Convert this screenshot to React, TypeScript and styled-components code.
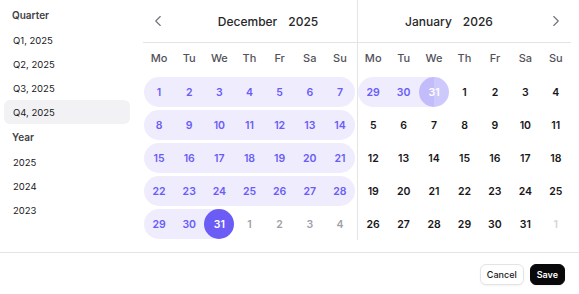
import React from "react"
import styled, { createGlobalStyle } from "styled-components"
import { ChevronLeft, ChevronRight } from "lucide-react"

type Kind = "range" | "end" | "outside" | "normal" | "disabled"

interface Cell {
	label: number
	kind: Kind
	ghost?: boolean
}

const weekdays = ["Mo", "Tu", "We", "Th", "Fr", "Sa", "Su"]

const range = (from: number, to: number, kind: Kind): Cell[] =>
	Array.from({ length: to - from + 1 }, (_, i) => ({ label: from + i, kind }))

const december: Cell[] = [
	...range(1, 30, "range"),
	{ label: 31, kind: "end" },
	...range(1, 4, "outside")
]

const january: Cell[] = [
	...range(29, 30, "range"),
	{ label: 31, kind: "end", ghost: true },
	...range(1, 31, "normal"),
	{ label: 1, kind: "disabled" }
]

const GlobalStyle = createGlobalStyle`
	body {
		margin: 0;
		background: #ffffff;
		font-family: Inter, "Noto Sans", sans-serif;
		color: #18181b;
	}
`

export default function App() {
	return (
		<Page>
			<GlobalStyle />
			<Main>
				<Sidebar>
					<GroupLabel>Quarter</GroupLabel>
					<PresetItem>Q1, 2025</PresetItem>
					<PresetItem>Q2, 2025</PresetItem>
					<PresetItem>Q3, 2025</PresetItem>
					<PresetItem $active>Q4, 2025</PresetItem>
					<GroupLabel>Year</GroupLabel>
					<PresetItem>2025</PresetItem>
					<PresetItem>2024</PresetItem>
					<PresetItem>2023</PresetItem>
				</Sidebar>
				<Calendars>
					<Month $width={214}>
						<MonthHeader>
							<NavButton>
								<ChevronLeft size={18} strokeWidth={1.5} />
							</NavButton>
							<MonthTitle $pad="0 0 0 6px">
								<span>December</span>
								<span>2025</span>
							</MonthTitle>
						</MonthHeader>
						<Grid $inset="0 2px 0 1px">
							{weekdays.map((d) => (
								<Weekday key={d}>{d}</Weekday>
							))}
						</Grid>
						<Days cells={december} inset="0 2px 0 1px" />
					</Month>
					<Month $width={213} $divider>
						<MonthHeader>
							<MonthTitle $pad="0 1px 0 0">
								<span>January</span>
								<span>2026</span>
							</MonthTitle>
							<NavButton>
								<ChevronRight size={18} strokeWidth={1.5} />
							</NavButton>
						</MonthHeader>
						<Grid $inset="0">
							{weekdays.map((d) => (
								<Weekday key={d}>{d}</Weekday>
							))}
						</Grid>
						<Days cells={january} inset="0" />
					</Month>
				</Calendars>
			</Main>
			<Footer>
				<Button>Cancel</Button>
				<Button $primary>Save</Button>
			</Footer>
		</Page>
	)
}

function Days({ cells, inset }: { cells: Cell[]; inset: string }) {
	return (
		<DayGrid $inset={inset}>
			{cells.map((c, i) => {
				const col = i % 7
				const inRange = c.kind === "range" || c.kind === "end"
				const prevInRange = col > 0 && (cells[i - 1].kind === "range" || cells[i - 1].kind === "end")
				return (
					<DayCell
						key={i}
						$band={inRange}
						$roundLeft={inRange && !prevInRange}
						$roundRight={c.kind === "range" && col === 6}
						$half={c.kind === "end"}
					>
						{c.kind === "end" ? (
							<Selected $ghost={c.ghost}>{c.label}</Selected>
						) : (
							<DayNumber $kind={c.kind}>{c.label}</DayNumber>
						)}
					</DayCell>
				)
			})}
		</DayGrid>
	)
}

const Page = styled.div`
	width: 579px;
	height: 294px;
	display: flex;
	flex-direction: column;
`
const Main = styled.div`
	display: flex;
	height: 252px;
`
const Sidebar = styled.div`
	width: 143px;
	box-sizing: border-box;
	padding: 2px 13px 0 4px;
	display: flex;
	flex-direction: column;
`
const GroupLabel = styled.div`
	height: 22px;
	margin: 2px 0;
	padding-left: 8px;
	display: flex;
	align-items: center;
	font-size: 10px;
	font-weight: 600;
	color: #3f3f46;
`
const PresetItem = styled.div<{ $active?: boolean }>`
	height: 24px;
	padding-left: 9px;
	display: flex;
	align-items: center;
	border-radius: 6px;
	font-size: 9.5px;
	color: #18181b;
	background: ${(p) => (p.$active ? "#f2f2f5" : "transparent")};
`
const Calendars = styled.div`
	display: flex;
	height: 240px;
`
const Month = styled.div<{ $width: number; $divider?: boolean }>`
	width: ${(p) => p.$width}px;
	border-left: ${(p) => (p.$divider ? "1px solid #e4e4e7" : "none")};
	display: flex;
	flex-direction: column;
`
const MonthHeader = styled.div`
	height: 42px;
	border-bottom: 1px solid #e4e4e7;
	display: flex;
	align-items: center;
`
const NavButton = styled.div`
	width: 30px;
	height: 30px;
	display: flex;
	align-items: center;
	justify-content: center;
	color: #71717a;
`
const MonthTitle = styled.div<{ $pad: string }>`
	flex: 1;
	display: flex;
	justify-content: center;
	gap: 11px;
	padding: ${(p) => p.$pad};
	font-size: 12px;
	font-weight: 500;
	color: #27272a;
`
const Grid = styled.div<{ $inset: string }>`
	display: grid;
	grid-template-columns: repeat(7, 1fr);
	margin: ${(p) => p.$inset};
`
const Weekday = styled.div`
	height: 30px;
	display: flex;
	align-items: center;
	justify-content: center;
	font-size: 11px;
	font-weight: 500;
	color: #52525b;
`
const DayGrid = styled(Grid)`
	margin-top: 4px;
	row-gap: 3px;
`
const DayCell = styled.div<{ $band: boolean; $roundLeft: boolean; $roundRight: boolean; $half: boolean }>`
	height: 30px;
	display: flex;
	align-items: center;
	justify-content: center;
	background: ${(p) =>
		!p.$band ? "transparent" : p.$half ? "linear-gradient(to right, #efecfe 50%, transparent 50%)" : "#efecfe"};
	border-radius: ${(p) => (p.$roundLeft ? "15px" : "0")} ${(p) => (p.$roundRight ? "15px 15px" : "0 0")}
		${(p) => (p.$roundLeft ? "15px" : "0")};
`
const DayNumber = styled.span<{ $kind: Kind }>`
	font-size: 10.5px;
	font-weight: 600;
	color: ${(p) =>
		p.$kind === "range"
			? "#6a5cf6"
			: p.$kind === "outside"
				? "#a1a1aa"
				: p.$kind === "disabled"
					? "#d4d4d8"
					: "#18181b"};
`
const Selected = styled.span<{ $ghost?: boolean }>`
	width: 30px;
	height: 30px;
	border-radius: 50%;
	display: flex;
	align-items: center;
	justify-content: center;
	font-size: 10.5px;
	font-weight: 600;
	color: #ffffff;
	background: ${(p) => (p.$ghost ? "rgba(107, 92, 246, 0.33)" : "#6b5cf6")};
`
const Footer = styled.div`
	flex: 1;
	border-top: 1px solid #e4e4e7;
	padding: 11px 14px 0;
	display: flex;
	justify-content: flex-end;
	align-items: flex-start;
	gap: 6px;
`
const Button = styled.div<{ $primary?: boolean }>`
	height: 21px;
	box-sizing: border-box;
	padding: 0 6px;
	display: flex;
	align-items: center;
	border-radius: 6px;
	font-size: 9px;
	font-weight: ${(p) => (p.$primary ? 600 : 500)};
	color: ${(p) => (p.$primary ? "#ffffff" : "#18181b")};
	background: ${(p) => (p.$primary ? "#09090b" : "#ffffff")};
	border: 1px solid ${(p) => (p.$primary ? "#09090b" : "#e4e4e7")};
	box-shadow: 0 1px 2px rgba(0, 0, 0, 0.05);
`
